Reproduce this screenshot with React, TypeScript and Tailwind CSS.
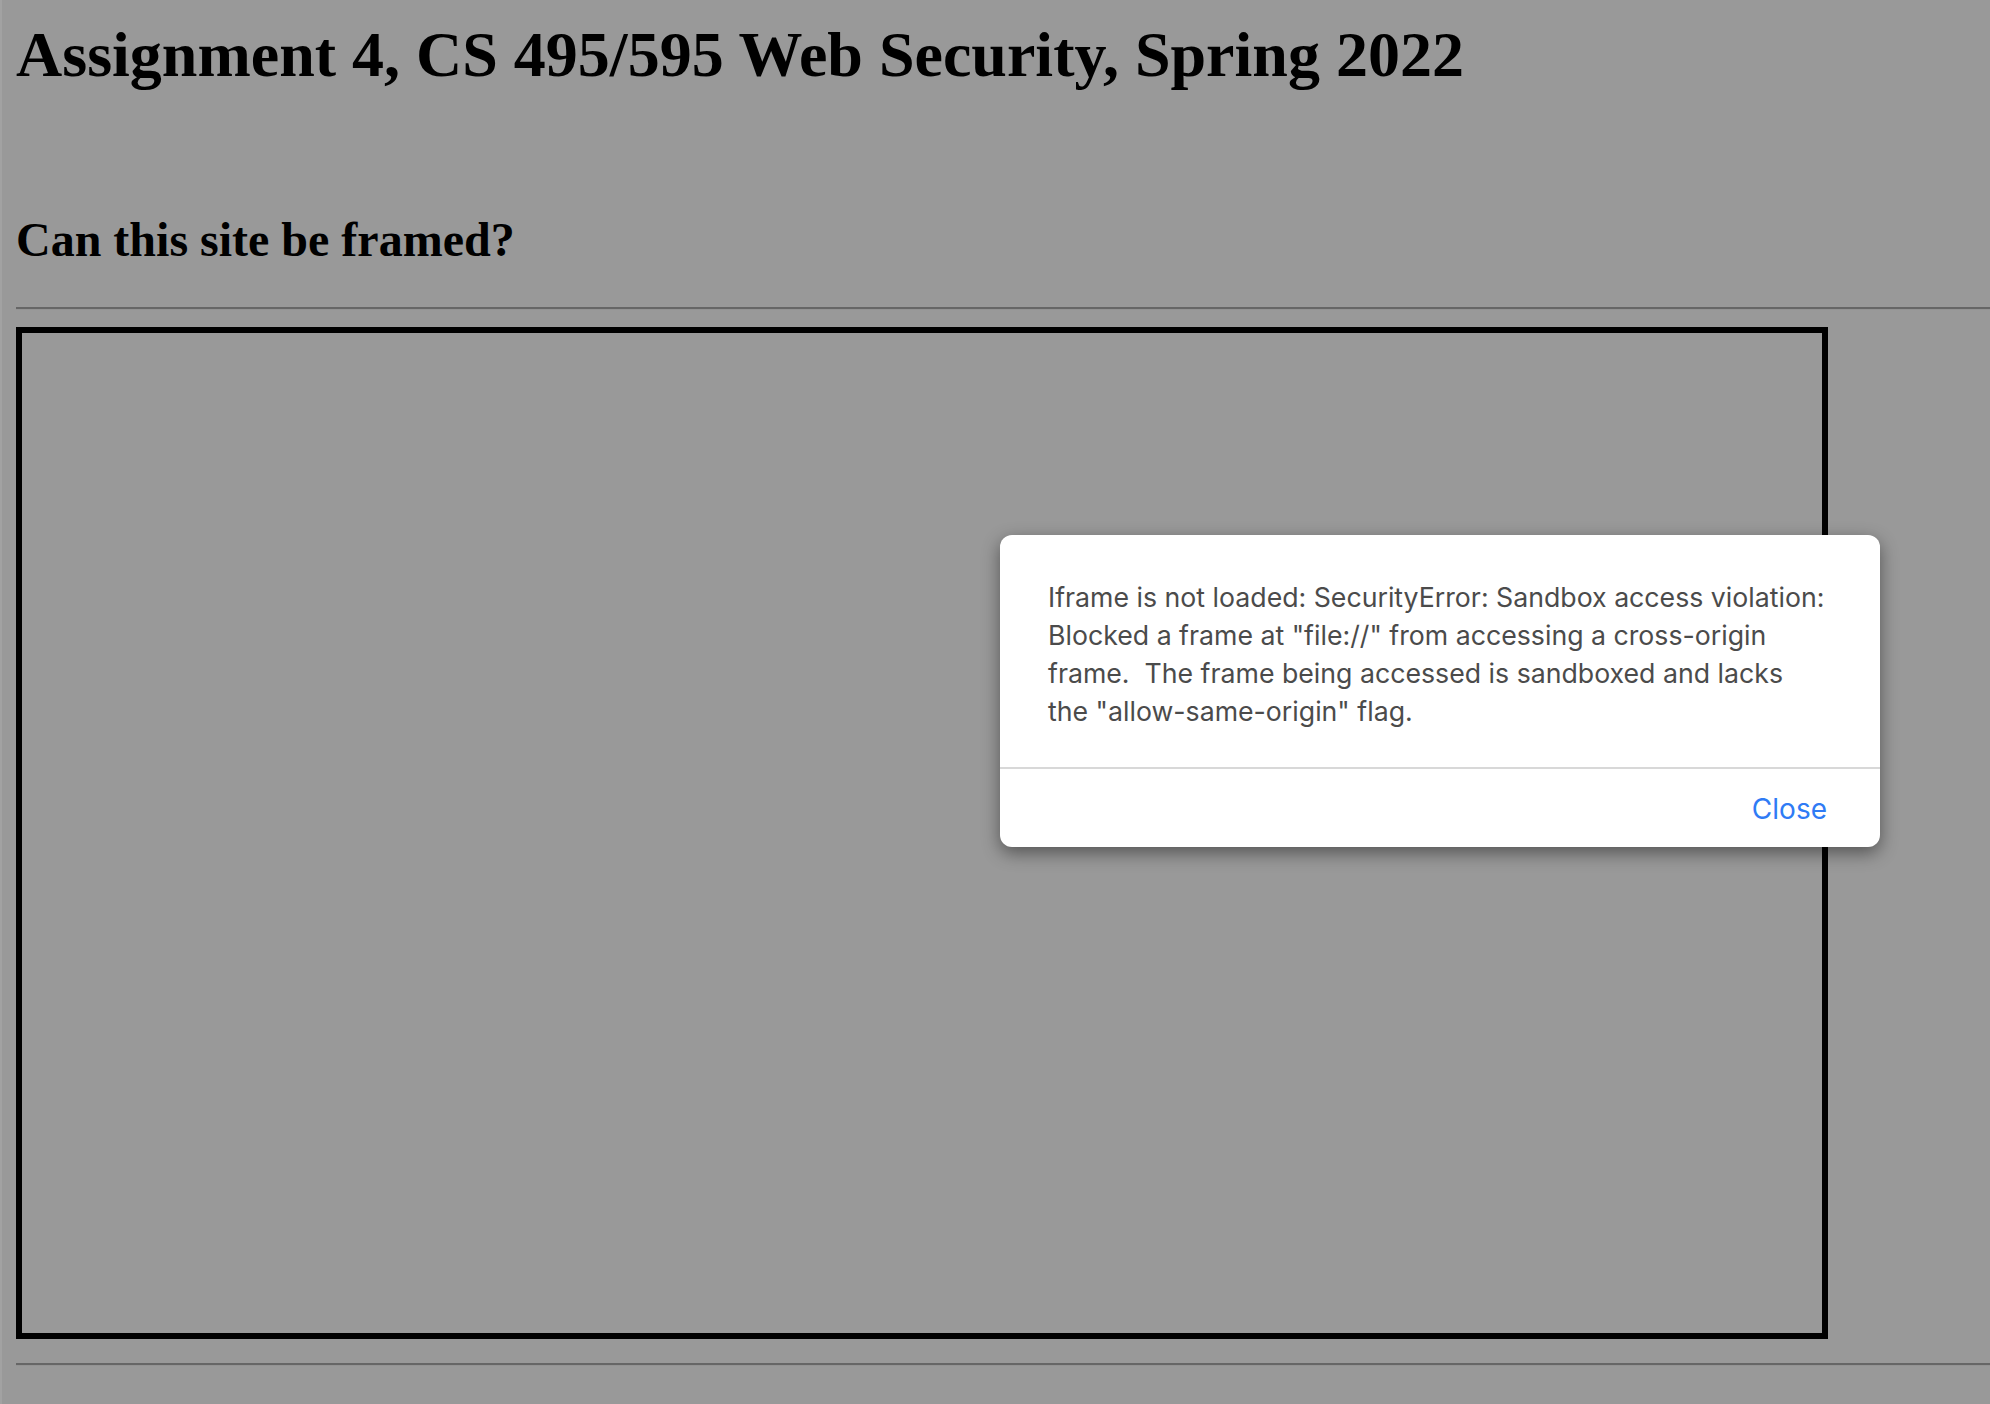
const serif = { fontFamily: '"Liberation Serif", "Times New Roman", serif' };

function Rule() {
  return <div className="h-[3px] border-t-2 border-b border-t-[#666666] border-b-[#939393]" />;
}

function SecurityDialog() {
  return (
    <div
      className="absolute left-[1000px] top-[535px] w-[880px] rounded-[12px] bg-white shadow-[0_6px_18px_rgba(0,0,0,0.45)]"
      style={{ fontFamily: 'Inter, "Noto Sans", sans-serif' }}
    >
      <p className="whitespace-pre px-[48px] pt-[43px] pb-[37px] text-[26.7px] leading-[38px] text-[#4b4b4b]">
        Iframe is not loaded: SecurityError: Sandbox access violation:
        <br />
        Blocked a frame at "file://" from accessing a cross-origin
        <br />
        frame.  The frame being accessed is sandboxed and lacks
        <br />
        the "allow-same-origin" flag.
      </p>
      <div className="h-[2px] bg-[#d8d8d8]" />
      <div className="flex h-[78px] justify-end pr-[53px] pt-[23px]">
        <button className="h-[34px] text-[28px] leading-[34px] text-[#2f7bf5]">Close</button>
      </div>
    </div>
  );
}

export default function App() {
  return (
    <div className="relative flex min-h-[1404px] bg-[#999999]">
      <div className="w-[2px] shrink-0 bg-[#a2a2a2]" />
      <div className="flex-1 pl-[14px] text-black" style={serif}>
        <h1 className="mt-[18px] text-[64px] font-bold leading-[74px]">
          Assignment 4, CS 495/595 Web Security, Spring 2022
        </h1>
        <h2 className="mt-[120px] text-[48px] font-bold leading-[56px]">Can this site be framed?</h2>
        <div className="mt-[39px]">
          <Rule />
        </div>
        <div className="mt-[17px] h-[1012px] w-[1812px] border-[6px] border-black" />
        <div className="mt-[24px]">
          <Rule />
        </div>
      </div>
      <SecurityDialog />
    </div>
  );
}
